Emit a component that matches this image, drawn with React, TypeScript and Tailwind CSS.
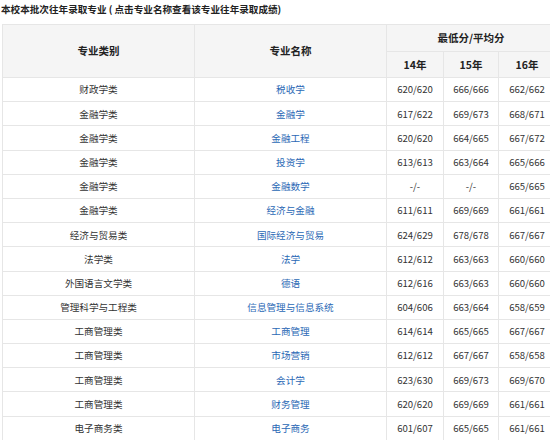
const rows: [string, string, string, string, string][] = [
  ["财政学类", "税收学", "620/620", "666/666", "662/662"],
  ["金融学类", "金融学", "617/622", "669/673", "668/671"],
  ["金融学类", "金融工程", "620/620", "664/665", "667/672"],
  ["金融学类", "投资学", "613/613", "663/664", "665/666"],
  ["金融学类", "金融数学", "-/-", "-/-", "665/665"],
  ["金融学类", "经济与金融", "611/611", "669/669", "661/661"],
  ["经济与贸易类", "国际经济与贸易", "624/629", "678/678", "667/667"],
  ["法学类", "法学", "612/612", "663/663", "660/660"],
  ["外国语言文学类", "德语", "612/616", "663/663", "660/660"],
  ["管理科学与工程类", "信息管理与信息系统", "604/606", "663/664", "658/659"],
  ["工商管理类", "工商管理", "614/614", "665/665", "667/667"],
  ["工商管理类", "市场营销", "612/612", "667/667", "658/658"],
  ["工商管理类", "会计学", "623/630", "669/673", "669/670"],
  ["工商管理类", "财务管理", "620/620", "669/669", "661/661"],
  ["电子商务类", "电子商务", "601/607", "665/665", "661/661"],
];

const font = { fontFamily: '"Noto Sans CJK SC", "Noto Sans", sans-serif' };

export default function App() {
  return (
    <div
      className="w-[550px] h-[440px] overflow-hidden bg-white text-[#333]"
      style={font}
    >
      <div className="h-[24px] pl-[1px] pt-[2px] text-[9.6px] font-bold leading-[14px] text-[#222]">
        本校本批次往年录取专业 ( 点击专业名称查看该专业往年录取成绩)
      </div>
      <table className="ml-[2px] w-[553px] table-fixed border-collapse text-center text-[9.6px]">
        <colgroup>
          <col className="w-[192px]" />
          <col className="w-[192px]" />
          <col className="w-[57px]" />
          <col className="w-[55px]" />
          <col className="w-[57px]" />
        </colgroup>
        <thead className="bg-[#f5f5f5] text-[10.5px] font-bold text-[#222]">
          <tr className="h-[27px]">
            <th rowSpan={2} className="border border-[#e6e6e6] font-bold">
              专业类别
            </th>
            <th rowSpan={2} className="border border-[#e6e6e6] font-bold">
              专业名称
            </th>
            <th colSpan={3} className="border border-[#e6e6e6] font-bold">
              最低分/平均分
            </th>
          </tr>
          <tr className="h-[26px]">
            <th className="border border-[#e6e6e6] font-bold">14年</th>
            <th className="border border-[#e6e6e6] font-bold">15年</th>
            <th className="border border-[#e6e6e6] font-bold">16年</th>
          </tr>
        </thead>
        <tbody>
          {rows.map((r, i) => (
            <tr key={i} className="h-[24.2px]">
              <td className="border border-[#e6e6e6]">{r[0]}</td>
              <td className="border border-[#e6e6e6] text-[#2a68b5]">{r[1]}</td>
              <td className="border border-[#e6e6e6]">{r[2]}</td>
              <td className="border border-[#e6e6e6]">{r[3]}</td>
              <td className="border border-[#e6e6e6]">{r[4]}</td>
            </tr>
          ))}
        </tbody>
      </table>
    </div>
  );
}
